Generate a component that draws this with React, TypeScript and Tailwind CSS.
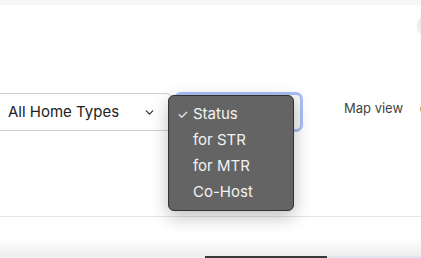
import { ChevronDown } from "lucide-react"

export default function App() {
  return (
    <div
      className="relative w-[421px] h-[258px] overflow-hidden bg-white"
      style={{ fontFamily: "Inter, 'Liberation Sans', Arial, sans-serif" }}
    >
      {/* top band */}
      <div className="h-[5px] bg-[#f7f7f7]" />

      {/* avatar edge */}
      <div className="absolute left-[417px] top-[14px] w-[24px] h-[24px] rounded-full bg-[#efedec]" />

      {/* filter row */}
      <div className="mt-[85px] flex items-center h-[44px]">
        <div className="shrink-0 -ml-[12px] w-[184px] h-[38px] flex items-center justify-between pl-[19px] pr-[15px] border border-[#cfcfcf] rounded-[6px] bg-white text-[15px] text-[#222]">
          <span>All Home Types</span>
          <ChevronDown className="w-[13px] h-[13px] text-[#333]" strokeWidth={2.4} />
        </div>
        <div className="shrink-0 ml-[2px] w-[129px] h-[40px] rounded-[7px] border-[3px] border-[#a9bff5] bg-[#f6f6f6]" />
        <span className="shrink-0 ml-[41px] mb-[6px] whitespace-nowrap text-[13px] text-[#444]">Map view</span>
        <div className="shrink-0 ml-[17px] mb-[6px] w-[12px] h-[12px] rounded-full bg-[#c9a46a]" />
      </div>

      {/* divider */}
      <div className="mt-[82px] h-px bg-[#e6e6e6]" />

      {/* bottom hint */}
      <div className="mt-[21px] h-[18px] bg-gradient-to-b from-white to-[#efefef]" />
      <div className="flex h-[2px]">
        <div className="w-[205px] bg-[#f0f0f0]" />
        <div className="w-[122px] bg-[#3a3a3a]" />
        <div className="flex-1 bg-[#dfe7f2]" />
      </div>

      {/* open dropdown */}
      <div className="absolute left-[168px] top-[95px] w-[126px] h-[116px] rounded-[6px] border border-[#333] bg-[#646464] shadow-[0_6px_18px_rgba(0,0,0,0.25)] py-[5px] text-[15px] text-[#f2f2f2] leading-[26px]">
        <div className="flex items-center">
          <span className="w-[24px] pl-[8px] text-[13px]">✓</span>
          <span>Status</span>
        </div>
        <div className="pl-[24px]">for STR</div>
        <div className="pl-[24px]">for MTR</div>
        <div className="pl-[24px]">Co-Host</div>
      </div>
    </div>
  )
}
